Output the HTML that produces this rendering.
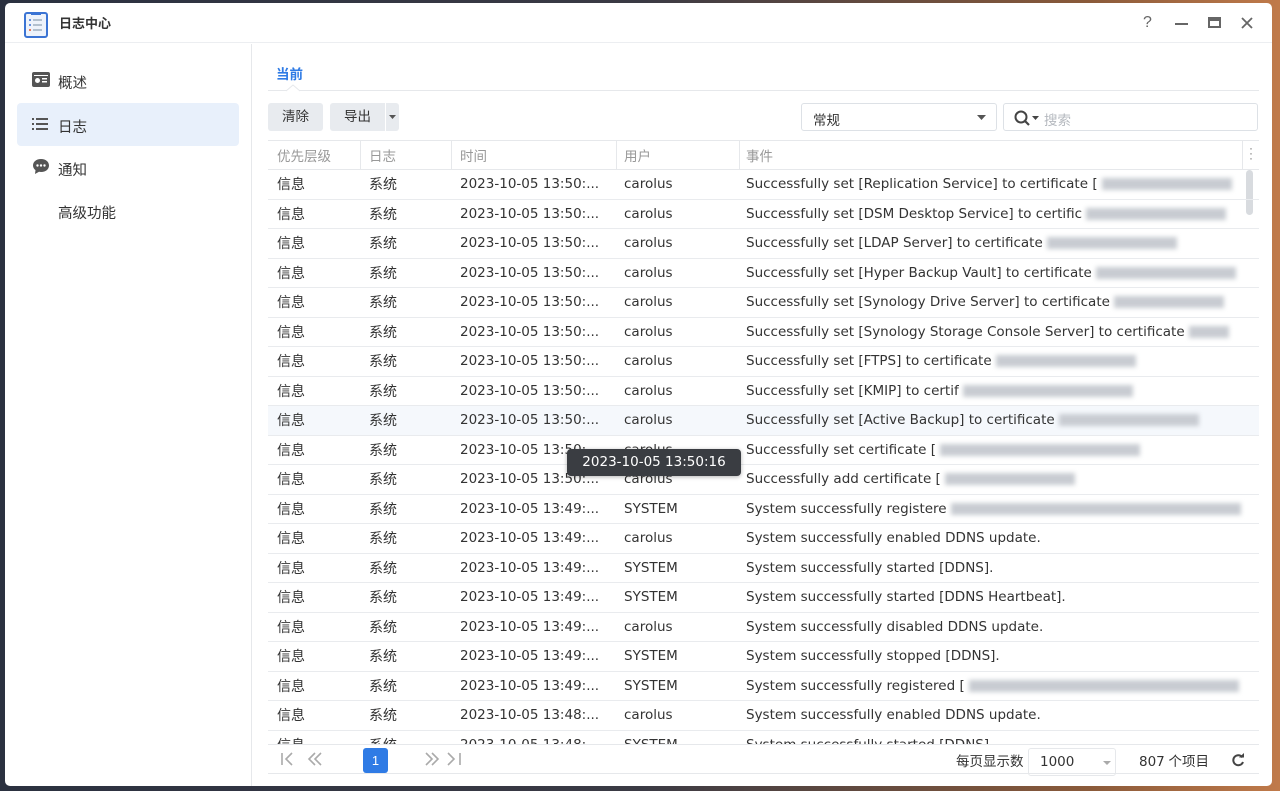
<!DOCTYPE html>
<html><head><meta charset="utf-8"><style>
*{box-sizing:border-box;margin:0;padding:0}
body{width:1280px;height:791px;overflow:hidden;background:linear-gradient(90deg,#2b3140 0%,#3a3a44 50%,#8a5a3a 85%,#c07a4a 100%);font-family:"Liberation Sans","Noto Sans CJK SC",sans-serif;font-size:14px;color:#333;position:relative}
.win{position:absolute;left:5px;top:3px;width:1267px;height:783px;background:#fff;border-radius:5px;overflow:hidden}
.title{height:40px;border-bottom:1px solid #eceef1;position:relative}
.title .t{position:absolute;left:54px;top:10px;font-size:13px;font-weight:bold;color:#333}
.side{position:absolute;left:0;top:41px;width:247px;bottom:0;border-right:1px solid #e6e8eb}
.item{position:absolute;left:12px;width:222px;height:43px;border-radius:4px;font-size:14.5px;color:#333}
.item span{position:absolute;left:41px;top:13px}
.abs{position:absolute}
.btn{position:absolute;top:100px;height:28px;background:#e8ebef;border-radius:3px;font-size:13.5px;color:#333;text-align:center;line-height:28px}
.row{position:absolute;left:263px;width:991px;height:29.5px;border-bottom:1px solid #e9ebee;font-family:"DejaVu Sans","Noto Sans CJK SC",sans-serif;font-size:13.5px}
.row div{position:absolute;top:6px;white-space:nowrap}
.row .c{font-family:"Noto Sans CJK SC",sans-serif;font-size:14px;top:4px}
.bl{display:inline-block;height:12px;background:#c8ccd2;filter:blur(2.5px);vertical-align:middle}
</style></head><body>
<div class="win">
 <div class="title">
  <svg class="abs" style="left:19px;top:9px" width="24" height="26" viewBox="0 0 24 26"><rect x="1" y="1" width="22" height="24" rx="2" fill="#eef3fb" stroke="#3b74d4" stroke-width="2"/><rect x="7" y="0" width="10" height="3" fill="#3b74d4"/><circle cx="6" cy="8" r="1" fill="#3b74d4"/><circle cx="6" cy="13" r="1" fill="#3b74d4"/><circle cx="6" cy="18" r="1" fill="#e8572f"/><rect x="9" y="7.3" width="9" height="1.4" fill="#9ab"/><rect x="9" y="12.3" width="9" height="1.4" fill="#9ab"/><rect x="9" y="17.3" width="9" height="1.4" fill="#9ab"/></svg>
  <div class="t">日志中心</div>
  <div class="abs" style="left:1138px;top:11px;font-size:16px;color:#666">?</div>
  <div class="abs" style="left:1170px;top:20px;width:13px;height:2px;background:#666"></div>
  <div class="abs" style="left:1203px;top:14px;width:13px;height:11px;border:2px solid #666;border-top-width:4px"></div>
  <svg class="abs" style="left:1236px;top:14px" width="12" height="12"><path d="M1 1L11 11M11 1L1 11" stroke="#666" stroke-width="1.8"/></svg>
 </div>
 <div class="side">
  <div class="item" style="top:15px"><svg class="abs" style="left:15px;top:13px" width="18" height="15"><rect x="0" y="0" width="18" height="15" rx="2" fill="#555"/><rect x="3" y="6" width="5" height="5" rx="2.5" fill="#fff"/><rect x="10" y="6" width="5" height="1.5" fill="#fff"/><rect x="10" y="9" width="5" height="1.5" fill="#fff"/><rect x="2" y="3" width="14" height="1" fill="#fff"/></svg><span>概述</span></div>
  <div class="item" style="top:59px;background:#e8f0fb"><svg class="abs" style="left:15px;top:14px" width="16" height="14" fill="#555"><rect x="0" y="1" width="2" height="2"/><rect x="0" y="6" width="2" height="2"/><rect x="0" y="11" width="2" height="2"/><rect x="4" y="1" width="12" height="2"/><rect x="4" y="6" width="12" height="2"/><rect x="4" y="11" width="12" height="2"/></svg><span>日志</span></div>
  <div class="item" style="top:102px"><svg class="abs" style="left:15px;top:12px" width="18" height="17"><path d="M9 1C4 1 1 4 1 7.5c0 2 1 3.6 2.5 4.6L3 16l4-2.2c.6.1 1.3.2 2 .2 5 0 8-3 8-6.5S14 1 9 1z" fill="#555"/><circle cx="5.5" cy="7.5" r="1.2" fill="#fff"/><circle cx="9" cy="7.5" r="1.2" fill="#fff"/><circle cx="12.5" cy="7.5" r="1.2" fill="#fff"/></svg><span>通知</span></div>
  <div class="item" style="top:145px"><span>高级功能</span></div>
 </div>
 <div class="abs" style="left:271px;top:60px;font-size:13.5px;font-weight:bold;color:#2f7be5">当前</div>
 <div class="abs" style="left:263px;top:87px;width:991px;height:1px;background:#e6e8eb"></div>
 <svg class="abs" style="left:281px;top:81px" width="14" height="8"><path d="M0 7L7 1L14 7" fill="#fff" stroke="#e6e8eb"/></svg>
 <div class="btn" style="left:263px;width:55px">清除</div>
 <div class="btn" style="left:325px;width:55px;border-radius:3px 0 0 3px">导出</div>
 <div class="btn" style="left:381px;width:13px;border-radius:0 3px 3px 0"><svg width="7" height="4" style="vertical-align:middle"><path d="M0 0h7L3.5 4z" fill="#555"/></svg></div>
 <div class="abs" style="left:796px;top:100px;width:196px;height:28px;border:1px solid #dde1e6;border-radius:3px"><span class="abs" style="left:11px;top:5px;font-size:13.5px">常规</span><svg class="abs" style="left:175px;top:11px" width="9" height="5"><path d="M0 0h9L4.5 5z" fill="#555"/></svg></div>
 <div class="abs" style="left:998px;top:100px;width:255px;height:28px;border:1px solid #dde1e6;border-radius:3px"><svg class="abs" style="left:10px;top:6px" width="26" height="17"><circle cx="7" cy="7" r="5.5" fill="none" stroke="#444" stroke-width="2"/><path d="M11 11l4 4" stroke="#444" stroke-width="2.2"/><path d="M18 6h7l-3.5 4z" fill="#444"/></svg><span class="abs" style="left:40px;top:5px;font-size:13.5px;color:#b5b9bf">搜索</span></div>
 <div class="abs" style="left:263px;top:137px;width:991px;height:30px;border-top:1px solid #e6e8eb;border-bottom:1px solid #e6e8eb;color:#999;font-size:13.5px">
  <span class="abs" style="left:9px;top:4px">优先层级</span><span class="abs" style="left:92px;top:0;width:1px;height:28px;background:#e6e8eb"></span>
  <span class="abs" style="left:101px;top:4px">日志</span><span class="abs" style="left:183px;top:0;width:1px;height:28px;background:#e6e8eb"></span>
  <span class="abs" style="left:192px;top:4px">时间</span><span class="abs" style="left:348px;top:0;width:1px;height:28px;background:#e6e8eb"></span>
  <span class="abs" style="left:356px;top:4px">用户</span><span class="abs" style="left:471px;top:0;width:1px;height:28px;background:#e6e8eb"></span>
  <span class="abs" style="left:478px;top:4px">事件</span><span class="abs" style="left:974px;top:0;width:1px;height:28px;background:#e6e8eb"></span>
  <span class="abs" style="left:981px;top:5px;color:#777;font-size:12px;line-height:5px">·<br>·<br>·</span>
 </div>
 <div class="abs" style="left:1241px;top:167px;width:7px;height:45px;background:#d8dbdf;border-radius:4px"></div>
 <div class="abs" style="left:263px;top:167px;width:991px;height:574px;overflow:hidden" id="tb"></div>
 <div class="abs" style="left:263px;top:741px;width:991px;height:1px;background:#e6e8eb"></div>
 <div class="abs" style="left:263px;top:770px;width:991px;height:1px;background:#e6e8eb"></div>
 <svg class="abs" style="left:276px;top:749px" width="50" height="14" fill="none" stroke="#aaa" stroke-width="1.6"><path d="M1 1v12M11 1L5 7l6 6M34 1l-6 6 6 6M40 1l-6 6 6 6"/></svg>
 <div class="abs" style="left:358px;top:745px;width:25px;height:25px;background:#2f7be5;border-radius:3px;color:#fff;text-align:center;line-height:25px;font-size:13px">1</div>
 <svg class="abs" style="left:420px;top:749px" width="50" height="14" fill="none" stroke="#aaa" stroke-width="1.6"><path d="M1 1l6 6-6 6M7 1l6 6-6 6M23 1l6 6-6 6M35 1v12"/></svg>
 <div class="abs" style="left:951px;top:747px;font-size:13.5px;color:#333">每页显示数</div>
 <div class="abs" style="left:1023px;top:745px;width:88px;height:28px;border:1px solid #e6e8eb;border-radius:3px;font-family:'DejaVu Sans',sans-serif;font-size:13.5px"><span class="abs" style="left:11px;top:5px">1000</span><svg class="abs" style="left:74px;top:12px" width="8" height="4"><path d="M0 0h8L4 4z" fill="#aaa"/></svg></div>
 <div class="abs" style="left:1134px;top:747px;font-size:13.5px"><span style="font-family:'DejaVu Sans',sans-serif">807</span> 个项目</div>
 <svg class="abs" style="left:1226px;top:750px" width="14" height="14"><path d="M11.5 4.5A5 5 0 1 0 12 9" fill="none" stroke="#444" stroke-width="2"/><path d="M8 4.5h5V0z" fill="#444"/></svg>
 <div class="abs" style="left:562px;top:446px;width:174px;height:27px;background:#3a3d42;border-radius:4px;color:#fff;font-family:'DejaVu Sans',sans-serif;font-size:13.5px;text-align:center;line-height:27px;box-shadow:0 1px 4px rgba(0,0,0,.3)">2023-10-05 13:50:16</div>
</div>
<script>
var d=[["carolus","Successfully set [Replication Service] to certificate [",130],["carolus","Successfully set [DSM Desktop Service] to certific",140],["carolus","Successfully set [LDAP Server] to certificate",130],["carolus","Successfully set [Hyper Backup Vault] to certificate",140],["carolus","Successfully set [Synology Drive Server] to certificate",110],["carolus","Successfully set [Synology Storage Console Server] to certificate",40],["carolus","Successfully set [FTPS] to certificate",140],["carolus","Successfully set [KMIP] to certif",170],["carolus","Successfully set [Active Backup] to certificate",140],["carolus","Successfully set certificate [",200],["carolus","Successfully add certificate [",130],["SYSTEM","System successfully registere",290],["carolus","System successfully enabled DDNS update.",0],["SYSTEM","System successfully started [DDNS].",0],["SYSTEM","System successfully started [DDNS Heartbeat].",0],["carolus","System successfully disabled DDNS update.",0],["SYSTEM","System successfully stopped [DDNS].",0],["SYSTEM","System successfully registered [",270],["carolus","System successfully enabled DDNS update.",0],["SYSTEM","System successfully started [DDNS].",0]];
var h="";for(var i=0;i<d.length;i++){var t=i<11?"13:50:...":(i<18?"13:49:...":"13:48:...");var bg=i==8?"background:#f5f8fc;":"";
h+='<div class="row" style="left:0;top:'+(i*29.5)+'px;'+bg+'"><div class="c" style="left:9px">信息</div><div class="c" style="left:101px">系统</div><div style="left:192px">2023-10-05 '+t+'</div><div style="left:356px">'+d[i][0]+'</div><div style="left:478px">'+d[i][1]+(d[i][2]?'<span class="bl" style="width:'+d[i][2]+'px;margin-left:4px"></span>':'')+'</div></div>';}
document.getElementById("tb").innerHTML=h;
</script>
</body></html>
